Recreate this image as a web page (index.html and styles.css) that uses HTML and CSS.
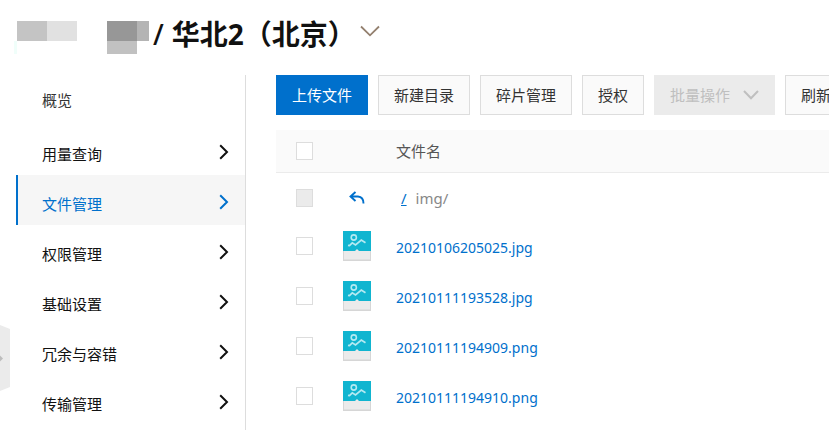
FILE: index.html
```html
<!DOCTYPE html>
<html lang="zh-CN">
<head>
<meta charset="utf-8">
<meta name="viewport" content="width=device-width, initial-scale=1">
<title>文件管理</title>
<link rel="stylesheet" href="styles.css">
</head>
<body>
<svg class="symbols" aria-hidden="true">
  <symbol id="chevron-right" viewBox="0 0 10 16"><path d="M1.2 1.2 8 8l-6.800 6.800" fill="none" stroke="currentColor" stroke-width="2"/></symbol>
  <symbol id="image-file" viewBox="0 0 28 30">
    <path d="M0 20h28v10H0z" fill="#d6d6d6"/>
    <path d="M1 20h26v8.500H1z" fill="#ebebeb"/>
    <path d="M0 0h28v20H0z" fill="#11b5d0"/>
    <path d="M11.500 20.500 14 18l2.500 2.500z" fill="#ebebeb"/>
    <circle cx="10.800" cy="6.500" r="2.600" fill="none" stroke="#b5e9f1" stroke-width="1.600"/>
    <path d="M5 14.300 6.500 14.600 9.300 11.800 12.500 14 18.300 9 22.500 11.800" fill="none" stroke="#b5e9f1" stroke-width="1.700"/>
  </symbol>
</svg>
<header class="header">
  <svg class="account" viewBox="0 0 135 34" aria-hidden="true" shape-rendering="crispEdges">
    <path d="M3 0h30v20H3z" fill="#c4c4c4"/>
    <path d="M33 0h30v20H33z" fill="#e1e1e1"/>
    <path d="M0 20h3v13H0z" fill="#f0fefa"/>
    <path d="M93 0h30v20H93z" fill="#979797"/>
    <path d="M123 0h12v20h-12z" fill="#b4b4b4"/>
    <path d="M93 20h30v13H93z" fill="#c1c1c1"/>
  </svg>
  <h1 class="title"><span class="slash">/</span><span>华北2（北京）</span></h1>
  <button class="region-toggle" type="button" aria-label="切换地域">
    <svg viewBox="0 0 20 12" aria-hidden="true"><path d="M1 1.500 10 10.300 19 1.500" fill="none" stroke="#94806f" stroke-width="1.800"/></svg>
  </button>
</header>
<div class="layout">
  <nav class="sidebar">
    <a class="item overview" href="#">概览</a>
    <a class="item" href="#"><span>用量查询</span><svg><use href="#chevron-right"/></svg></a>
    <a class="item active" href="#" aria-current="page"><span>文件管理</span><svg><use href="#chevron-right"/></svg></a>
    <a class="item" href="#"><span>权限管理</span><svg><use href="#chevron-right"/></svg></a>
    <a class="item" href="#"><span>基础设置</span><svg><use href="#chevron-right"/></svg></a>
    <a class="item" href="#"><span>冗余与容错</span><svg><use href="#chevron-right"/></svg></a>
    <a class="item" href="#"><span>传输管理</span><svg><use href="#chevron-right"/></svg></a>
  </nav>
  <main class="content">
    <div class="toolbar">
      <button class="btn primary" type="button">上传文件</button>
      <button class="btn" type="button">新建目录</button>
      <button class="btn" type="button">碎片管理</button>
      <button class="btn" type="button">授权</button>
      <button class="btn" type="button" disabled>批量操作<svg viewBox="0 0 16 10" aria-hidden="true"><path d="M1 1 8 8.200 15 1" fill="none" stroke="currentColor" stroke-width="2"/></svg></button>
      <button class="btn" type="button">刷新</button>
    </div>
    <table class="files">
      <thead>
        <tr><th class="check"><input type="checkbox" aria-label="全选"></th><th class="icon"></th><th class="name">文件名</th></tr>
      </thead>
      <tbody>
        <tr class="path">
          <td class="check"><input type="checkbox" aria-label="上级目录" disabled></td>
          <td class="icon"><a class="back" href="#" aria-label="返回"><svg viewBox="0 0 16 14"><path d="M6.500 1 1.500 5.500l5 4.500M1.500 5.500H9q5.500.3 5.500 7" fill="none" stroke="currentColor" stroke-width="1.900"/></svg></a></td>
          <td class="name"><a class="root" href="#">/</a><span>img/</span></td>
        </tr>
        <tr>
          <td class="check"><input id="f1" type="checkbox" aria-labelledby="n1"></td>
          <td class="icon"><svg><use href="#image-file"/></svg></td>
          <td class="name"><a id="n1" href="#">20210106205025.jpg</a></td>
        </tr>
        <tr>
          <td class="check"><input id="f2" type="checkbox" aria-labelledby="n2"></td>
          <td class="icon"><svg><use href="#image-file"/></svg></td>
          <td class="name"><a id="n2" href="#">20210111193528.jpg</a></td>
        </tr>
        <tr>
          <td class="check"><input id="f3" type="checkbox" aria-labelledby="n3"></td>
          <td class="icon"><svg><use href="#image-file"/></svg></td>
          <td class="name"><a id="n3" href="#">20210111194909.png</a></td>
        </tr>
        <tr>
          <td class="check"><input id="f4" type="checkbox" aria-labelledby="n4"></td>
          <td class="icon"><svg><use href="#image-file"/></svg></td>
          <td class="name"><a id="n4" href="#">20210111194910.png</a></td>
        </tr>
      </tbody>
    </table>
  </main>
</div>
<button class="drawer" type="button" aria-label="展开侧栏">
  <svg viewBox="0 0 10 66" aria-hidden="true"><path d="M0 0 10 4v58L0 66z" fill="#ebebeb"/><path d="M0 30.500 3 33.500 0 36.500z" fill="#bdbdbd"/></svg>
</button>
</body>
</html>
```

FILE: styles.css
```css
* {
  box-sizing: border-box;
}

body {
  margin: 0;
  overflow: hidden;
  background: #fff;
  color: #111;
  font: 15px/20px "Noto Sans", "Noto Sans CJK SC", sans-serif;
}

a {
  color: #0070cc;
  text-decoration: none;
}

button {
  font: inherit;
  cursor: pointer;
}

.symbols {
  position: absolute;
  width: 0;
  height: 0;
}

.header {
  display: flex;
  align-items: flex-start;
  height: 75px;
  padding: 21px 14px 0;
}

.account {
  flex: none;
  width: 135px;
  height: 34px;
}

.title {
  display: flex;
  gap: 8px;
  margin: 0 0 0 4px;
  font-size: 28px;
  line-height: 26px;
  white-space: nowrap;
}

.slash {
  font-weight: 500;
}

.region-toggle {
  display: flex;
  margin: 4px 0 0 4px;
  padding: 0;
  border: 0;
  background: none;
}

.region-toggle svg {
  width: 20px;
  height: 12px;
}

.layout {
  display: flex;
  min-height: calc(100vh - 75px);
}

.sidebar {
  flex: none;
  width: 230px;
  margin-left: 16px;
  border-right: 1px solid #ddd;
}

.item {
  display: flex;
  align-items: center;
  justify-content: space-between;
  height: 50px;
  padding: 4px 16px 0 24px;
  border-left: 2px solid transparent;
  color: #111;
}

.item span {
  padding-top: 4px;
}

.item svg {
  width: 10px;
  height: 16px;
}

.item.overview {
  padding-top: 0;
  color: #333;
}

.item.active {
  border-color: #0070cc;
  background: #f6f6f6;
  color: #0070cc;
}

.content {
  flex: 1;
  min-width: 0;
  margin-left: 30px;
}

.toolbar {
  display: flex;
  gap: 10px;
  margin-bottom: 15px;
}

.btn {
  display: flex;
  flex: none;
  align-items: center;
  gap: 13px;
  height: 40px;
  padding: 0 15px;
  border: 1px solid #ddd;
  background: #fafafa;
  color: #333;
}

.btn.primary {
  border-color: #0070cc;
  background: #0070cc;
  color: #fff;
}

.btn:disabled {
  border-color: #ebebeb;
  background: #ebebeb;
  color: #bfbfbf;
}

.btn svg {
  width: 16px;
  height: 10px;
}

.files {
  width: 100%;
  border-spacing: 0;
  table-layout: fixed;
}

.files th {
  height: 43px;
  padding: 0;
  border-bottom: 1px solid #ebebeb;
  background: #fafafa;
  color: #555;
  font-weight: 400;
  text-align: left;
}

.files td {
  height: 50px;
  padding: 0;
}

.files .check {
  width: 66px;
  padding-left: 20px;
}

.files .icon {
  width: 54px;
}

.files tbody .name {
  font-size: 14px;
}

.files td svg {
  display: block;
  width: 30px;
  height: 30px;
}

.files tr:not(.path) td.check,
.files tr:not(.path) td.icon {
  padding-bottom: 4px;
}

.files input {
  display: block;
  appearance: none;
  width: 17px;
  height: 18px;
  margin: 0;
  border: 1px solid #ddd;
  background: #fff;
}

.files input:disabled {
  background: #ebebeb;
}

.files .back svg {
  width: 16px;
  height: 14px;
  margin-left: 7px;
}

.files .path .name {
  color: #888;
  font-size: 15px;
}

.path .root {
  margin: 0 9px 0 5px;
  text-decoration: underline;
}

.drawer {
  position: absolute;
  top: 325px;
  left: 0;
  display: flex;
  padding: 0;
  border: 0;
  background: none;
}

.drawer svg {
  width: 10px;
  height: 66px;
}
```
